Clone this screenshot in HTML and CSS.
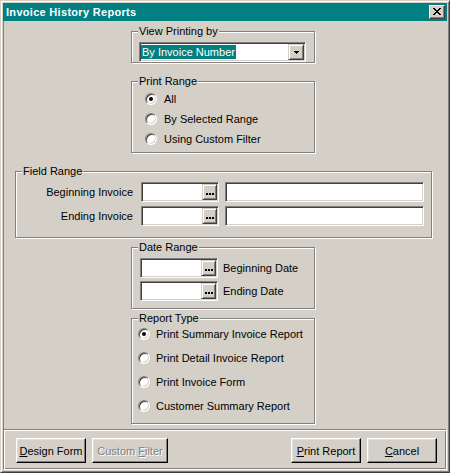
FILE: index.html
```html
<!DOCTYPE html>
<html>
<head>
<meta charset="utf-8">
<title>Invoice History Reports</title>
<link rel="stylesheet" href="styles.css">
</head>
<body>
<div class="window">
  <div class="titlebar">
    <span class="title">Invoice History Reports</span>
    <span class="close"><svg width="8" height="7" viewBox="0 0 8 7" shape-rendering="crispEdges"><path d="M0 0h2v1h1v1h2v-1h1v-1h2v1h-1v1h-1v1h-1v1h1v1h1v1h1v1h-2v-1h-1v-1h-2v1h-1v1h-2v-1h1v-1h1v-1h1v-1h-1v-1h-1v-1h-1z" fill="#000"/></svg></span>
  </div>
  <div class="content">
    <fieldset class="group g-center g-view">
      <legend>View Printing by</legend>
      <div class="inner">
        <div class="combo">
          <span class="combo-sel">By Invoice Number</span>
          <span class="combo-btn"><svg width="5" height="3" viewBox="0 0 5 3" shape-rendering="crispEdges"><path d="M0 0h5v1h-1v1h-1v1h-1v-1h-1v-1h-1z" fill="#000"/></svg></span>
        </div>
      </div>
    </fieldset>

    <fieldset class="group g-center g-range">
      <legend>Print Range</legend>
      <div class="inner radio-list">
        <div class="radio"><span class="rb checked"></span><span>All</span></div>
        <div class="radio"><span class="rb"></span><span>By Selected Range</span></div>
        <div class="radio"><span class="rb"></span><span>Using Custom Filter</span></div>
      </div>
    </fieldset>

    <fieldset class="group g-field">
      <legend>Field Range</legend>
      <div class="inner frows">
        <div class="frow">
          <span class="flbl">Beginning Invoice</span>
          <div class="pick"><span class="pick-text"></span><span class="dots"><svg width="8" height="2" viewBox="0 0 8 2" shape-rendering="crispEdges"><path d="M0 0h2v2h-2zM3 0h2v2h-2zM6 0h2v2h-2z" fill="#000"/></svg></span></div>
          <div class="tinput"></div>
        </div>
        <div class="frow">
          <span class="flbl">Ending Invoice</span>
          <div class="pick"><span class="pick-text"></span><span class="dots"><svg width="8" height="2" viewBox="0 0 8 2" shape-rendering="crispEdges"><path d="M0 0h2v2h-2zM3 0h2v2h-2zM6 0h2v2h-2z" fill="#000"/></svg></span></div>
          <div class="tinput"></div>
        </div>
      </div>
    </fieldset>

    <fieldset class="group g-center g-date">
      <legend>Date Range</legend>
      <div class="inner drows">
        <div class="drow">
          <div class="pick"><span class="pick-text"></span><span class="dots"><svg width="8" height="2" viewBox="0 0 8 2" shape-rendering="crispEdges"><path d="M0 0h2v2h-2zM3 0h2v2h-2zM6 0h2v2h-2z" fill="#000"/></svg></span></div>
          <span class="dlbl">Beginning Date</span>
        </div>
        <div class="drow">
          <div class="pick"><span class="pick-text"></span><span class="dots"><svg width="8" height="2" viewBox="0 0 8 2" shape-rendering="crispEdges"><path d="M0 0h2v2h-2zM3 0h2v2h-2zM6 0h2v2h-2z" fill="#000"/></svg></span></div>
          <span class="dlbl">Ending Date</span>
        </div>
      </div>
    </fieldset>

    <fieldset class="group g-center g-type">
      <legend>Report Type</legend>
      <div class="inner radio-list">
        <div class="radio"><span class="rb checked"></span><span>Print Summary Invoice Report</span></div>
        <div class="radio"><span class="rb"></span><span>Print Detail Invoice Report</span></div>
        <div class="radio"><span class="rb"></span><span>Print Invoice Form</span></div>
        <div class="radio"><span class="rb"></span><span>Customer Summary Report</span></div>
      </div>
    </fieldset>
  </div>
  <div class="footer">
    <div class="btns">
      <button class="btn w70"><u>D</u>esign Form</button>
      <button class="btn w76 disabled" disabled>Custom <u>F</u>ilter</button>
    </div>
    <div class="btns">
      <button class="btn w70"><u>P</u>rint Report</button>
      <button class="btn w70"><u>C</u>ancel</button>
    </div>
  </div>
</div>
</body>
</html>
```

FILE: styles.css
```css
html, body {
  margin: 0;
  padding: 0;
  background: #d4d0c8;
}
body {
  font-family: "Liberation Sans", Arial, sans-serif;
  font-size: 11px;
  color: #000;
}
.window {
  width: 450px;
  height: 473px;
  box-sizing: border-box;
  border: 1px solid;
  border-color: #d4d0c8 #404040 #404040 #d4d0c8;
  box-shadow: inset 1px 1px #fff, inset -1px -1px #808080;
  padding: 2px;
  display: flex;
  flex-direction: column;
  background: #d4d0c8;
}
.titlebar {
  height: 18px;
  flex: none;
  background: #008080;
  display: flex;
  align-items: center;
  justify-content: space-between;
  padding-left: 3px;
}
.title {
  color: #fff;
  font-weight: bold;
  font-size: 11px;
  letter-spacing: 0.3px;
}
.close {
  width: 16px;
  height: 14px;
  box-sizing: border-box;
  margin-right: 2px;
  background: #d4d0c8;
  border: 1px solid;
  border-color: #fff #404040 #404040 #fff;
  box-shadow: inset -1px -1px #808080;
  display: flex;
  align-items: center;
  justify-content: center;
  padding: 0 1px 1px 0;
}
.close svg { display: block; }
.content {
  height: 408px;
  flex: none;
  box-sizing: border-box;
  border-left: 1px solid #808080;
  padding-top: 4px;
  display: flex;
  flex-direction: column;
}
.group {
  margin: 0;
  padding: 0;
  border: 1px solid #808080;
  box-shadow: inset 1px 1px #fff, 1px 1px #fff;
  min-width: 0;
  box-sizing: border-box;
}
.group legend {
  margin-left: 6px;
  padding: 0 1px;
  height: 13px;
  line-height: 13px;
  background: #d4d0c8;
}
.g-center {
  width: 184px;
  margin-left: 127px;
}
.g-view { padding: 4px 0 0 0; }
.g-view .inner { padding-left: 7px; }
.g-range {
  margin-top: 12px;
  padding: 3px 0 5px 0;
}
.g-range .inner { padding-left: 13px; }
.g-field {
  width: 417px;
  margin-left: 11px;
  margin-top: 12px;
  padding: 4px 0 11px 0;
}
.g-date {
  margin-top: 3px;
  padding: 4px 0 7px 0;
}
.g-date .inner { padding-left: 8px; }
.g-type {
  margin-top: 3px;
  padding: 1px 0 9px 0;
}
.g-type .inner { padding-left: 6px; }
/* combo */
.combo {
  width: 167px;
  height: 20px;
  box-sizing: border-box;
  background: #fff;
  border: 1px solid;
  border-color: #808080 #fff #fff #808080;
  box-shadow: inset 1px 1px #404040, inset -1px -1px #d4d0c8;
  padding: 1px;
  display: flex;
  align-items: stretch;
}
.combo-sel {
  background: #008080;
  color: #fff;
  margin: 1px auto 1px 0;
  padding: 0 1px;
  line-height: 14px;
}
.combo-btn, .dots {
  width: 16px;
  flex: none;
  box-sizing: border-box;
  background: #d4d0c8;
  border: 1px solid;
  border-color: #d4d0c8 #404040 #404040 #d4d0c8;
  box-shadow: inset 1px 1px #fff, inset -1px -1px #808080;
  display: flex;
  align-items: center;
  justify-content: center;
}
.combo-btn svg, .dots svg { display: block; }
.dots {
  width: 15px;
  padding-top: 3px;
}
/* radios */
.radio-list {
  display: flex;
  flex-direction: column;
  gap: 4px;
}
.g-type .radio-list { gap: 8px; }
.radio {
  height: 16px;
  display: flex;
  align-items: center;
}
.rb {
  width: 12px;
  height: 12px;
  flex: none;
  box-sizing: border-box;
  border-radius: 50%;
  background: #fff;
  border: 1px solid;
  border-color: #808080 #fff #fff #808080;
  box-shadow: inset 1px 1px #404040, inset -1px -1px #d4d0c8;
  display: flex;
  align-items: center;
  justify-content: center;
  margin-right: 7px;
}
.g-type .rb { margin-right: 6px; }
.rb.checked::after {
  content: "";
  width: 4px;
  height: 4px;
  border-radius: 50%;
  background: #000;
}
/* field range */
.frows {
  display: flex;
  flex-direction: column;
  gap: 4px;
}
.frow {
  display: flex;
  align-items: center;
}
.flbl {
  width: 117px;
  margin-right: 8px;
  text-align: right;
}
.pick {
  width: 78px;
  height: 20px;
  flex: none;
  box-sizing: border-box;
  background: #fff;
  border: 1px solid;
  border-color: #808080 #fff #fff #808080;
  box-shadow: inset 1px 1px #404040, inset -1px -1px #d4d0c8;
  padding: 1px;
  display: flex;
}
.pick-text { flex: 1; }
.tinput {
  width: 199px;
  height: 20px;
  margin-left: 6px;
  box-sizing: border-box;
  background: #fff;
  border: 1px solid;
  border-color: #808080 #fff #fff #808080;
  box-shadow: inset 1px 1px #404040, inset -1px -1px #d4d0c8;
}
/* date range */
.drows {
  display: flex;
  flex-direction: column;
  gap: 3px;
}
.drow {
  display: flex;
  align-items: center;
}
.dlbl { margin-left: 5px; }
/* footer */
.footer {
  height: 41px;
  flex: none;
  box-sizing: border-box;
  border: 1px solid;
  border-color: #808080 #fff #fff #808080;
  box-shadow: inset 1px 1px #fff, inset -1px -1px #808080;
  padding: 8px 9px 0 12px;
  display: flex;
  justify-content: space-between;
  align-items: flex-start;
}
.btns {
  display: flex;
  gap: 6px;
}
.btn {
  height: 25px;
  box-sizing: border-box;
  background: #d4d0c8;
  border: 1px solid;
  border-color: #fff #000 #000 #fff;
  box-shadow: inset -1px -1px #808080, inset 1px 1px #dfdfdf;
  font: inherit;
  color: #000;
  padding: 0;
  margin: 0;
  border-radius: 0;
}
.w70 { width: 70px; }
.w76 { width: 76px; }
.btn.disabled {
  color: #808080;
  text-shadow: 1px 1px #fff;
}
```
